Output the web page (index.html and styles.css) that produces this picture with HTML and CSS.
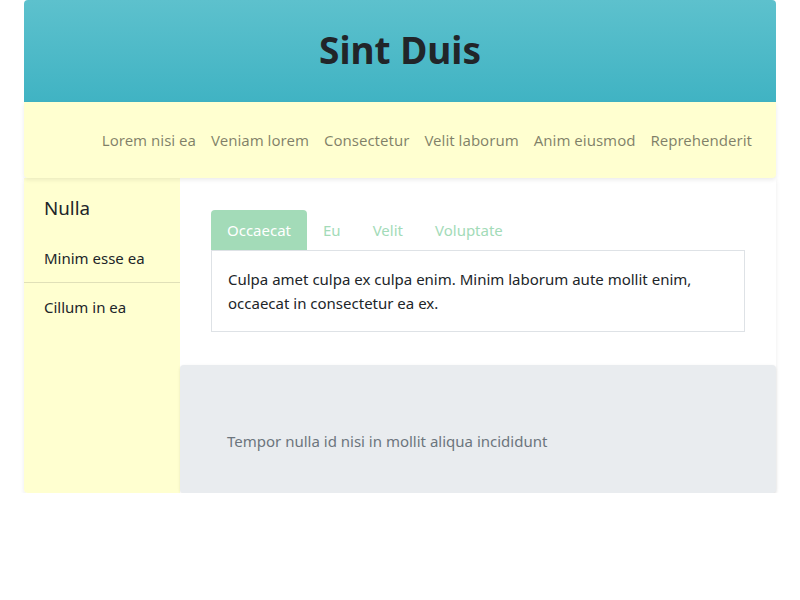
FILE: index.html
```html
<!DOCTYPE html>
<html>
<head>
<meta charset="utf-8">
<link rel="stylesheet" href="styles.css">
</head>
<body>
<div class="page">
  <header class="hero"><h1>Sint Duis</h1></header>
  <nav class="topnav">
    <a>Lorem nisi ea</a>
    <a>Veniam lorem</a>
    <a>Consectetur</a>
    <a>Velit laborum</a>
    <a>Anim eiusmod</a>
    <a>Reprehenderit</a>
  </nav>
  <div class="body">
    <aside class="side">
      <div class="side-title">Nulla</div>
      <div class="side-item first">Minim esse ea</div>
      <div class="side-item">Cillum in ea</div>
    </aside>
    <main class="main">
      <section class="tabs-area">
        <div class="tabs">
          <span class="tab active">Occaecat</span>
          <span class="tab">Eu</span>
          <span class="tab">Velit</span>
          <span class="tab">Voluptate</span>
        </div>
        <div class="tab-box">Culpa amet culpa ex culpa enim. Minim laborum aute mollit enim, occaecat in consectetur ea ex.</div>
      </section>
      <section class="card">Tempor nulla id nisi in mollit aliqua incididunt</section>
    </main>
  </div>
</div>
</body>
</html>
```
FILE: styles.css
```css
* { box-sizing: border-box; }
body {
  margin: 0;
  background: #fff;
  font-family: "Noto Sans", "Open Sans", sans-serif;
  color: #212529;
  font-size: 15px;
  line-height: 24px;
}
.page {
  width: 752px;
  margin: 0 auto;
}
.hero {
  height: 102px;
  padding-bottom: 3px;
  border-radius: 4px 4px 0 0;
  background: linear-gradient(#5dc1cd, #40b3c3);
  display: flex;
  align-items: center;
  justify-content: center;
}
.hero h1 {
  margin: 0;
  font-size: 37px;
  line-height: 48px;
  font-weight: 700;
  color: #212529;
}
.topnav {
  height: 76px;
  background: #ffffd0;
  display: flex;
  align-items: center;
  justify-content: flex-end;
  gap: 15px;
  padding-right: 24px;
  box-shadow: 0 2px 4px rgba(0,0,0,0.08);
  position: relative;
  z-index: 2;
  border-radius: 0 0 4px 4px;
}
.topnav a {
  color: rgba(0,0,0,0.5);
}
.body {
  display: flex;
  box-shadow: 0 2px 4px rgba(0,0,0,0.08);
  border-radius: 0 0 4px 4px;
}
.side {
  width: 156px;
  background: #ffffd0;
  padding-top: 16px;
  border-radius: 0 0 0 4px;
}
.side-title {
  font-size: 18.75px;
  padding: 0 20px;
  line-height: 28px;
  margin-bottom: 24px;
}
.side-item {
  padding: 0 20px 12px;
  line-height: 24px;
}
.side-item.first {
  border-bottom: 1px solid #e0e0b8;
  margin-bottom: 12px;
}
.main {
  flex: 1;
  display: flex;
  flex-direction: column;
}
.tabs-area {
  padding: 32px 31px 33px;
}
.tabs {
  display: flex;
}
.tab {
  padding: 8px 16px;
  color: #a3dbb8;
  border-radius: 4px 4px 0 0;
}
.tab.active {
  background: #a3dbb8;
  color: #fff;
}
.tab-box {
  border: 1px solid #dee2e6;
  padding: 16px;
}
.card {
  background: #e9ecef;
  border-radius: 4px;
  padding: 64px 47px 40px;
  color: #6c757d;
  box-shadow: 0 1px 3px rgba(0,0,0,0.1);
}
```
